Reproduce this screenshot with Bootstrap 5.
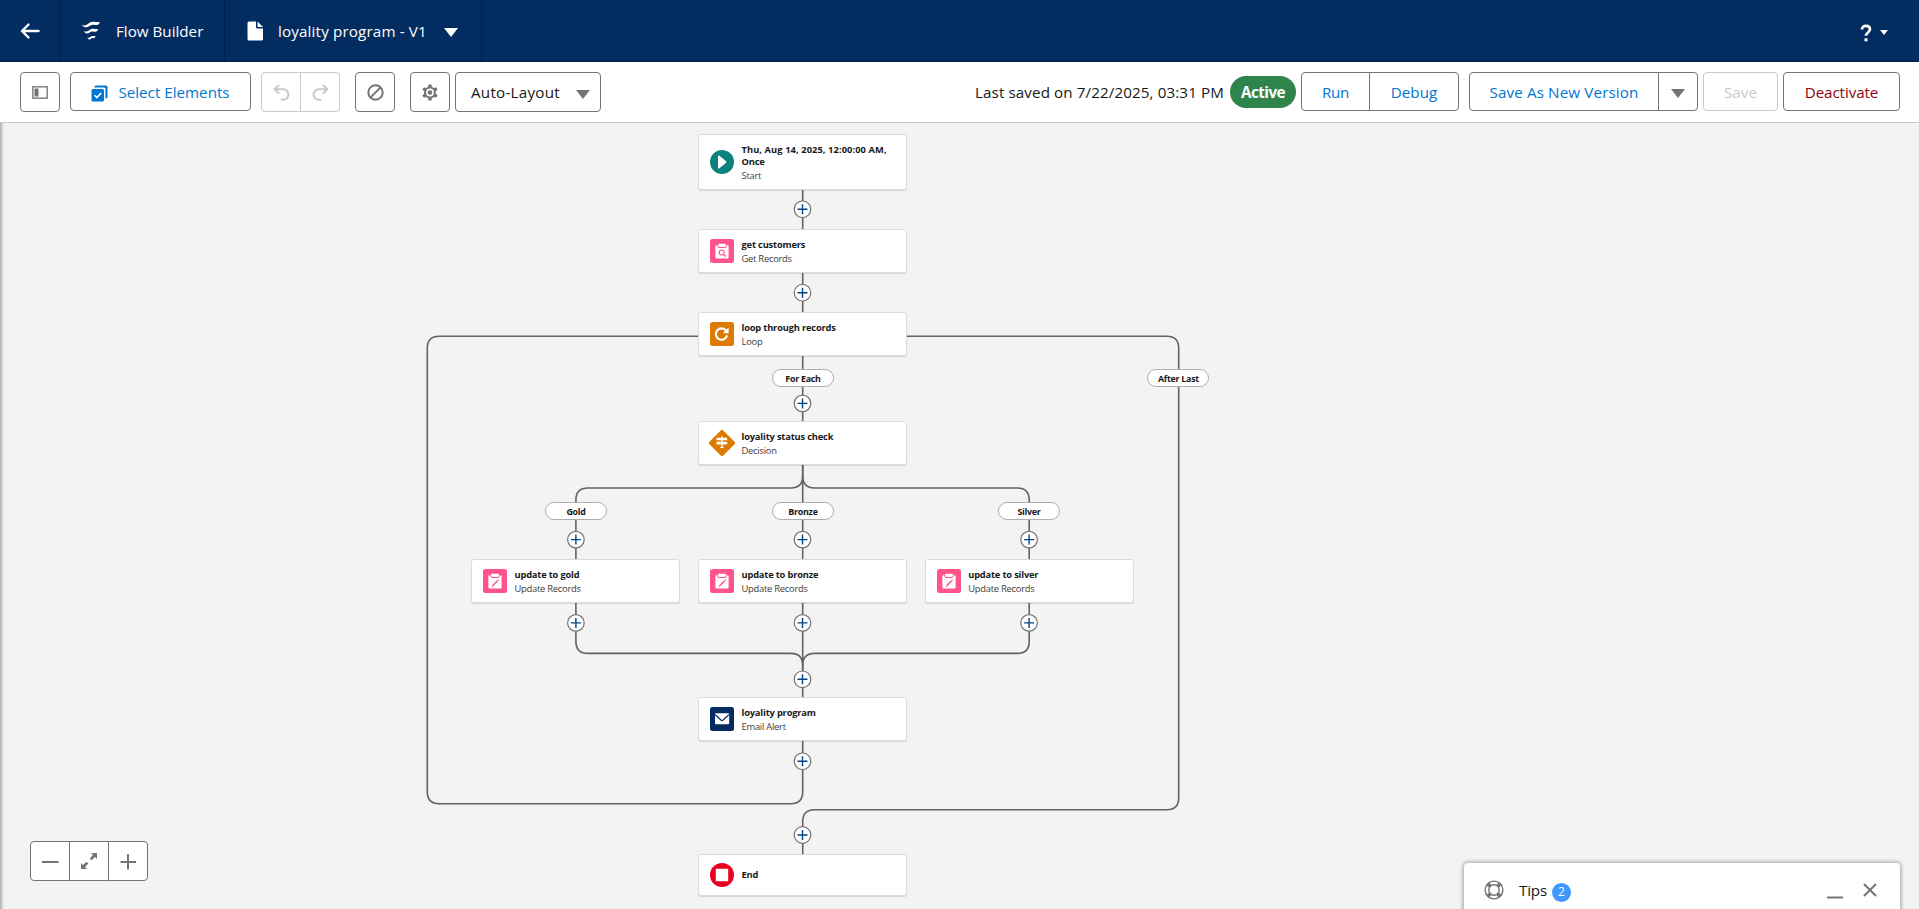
<!DOCTYPE html>
<html lang="en">
<head>
<meta charset="utf-8">
<title>Flow Builder</title>
<link href="https://cdn.jsdelivr.net/npm/bootstrap@5.3.0/dist/css/bootstrap.min.css" rel="stylesheet">
<style>
body{font-family:"Open Sans","Noto Sans",sans-serif;font-size:15.2px;line-height:20px;color:#181818;height:909px;overflow:hidden;background:#f3f3f3}
svg{display:block;flex:none}
.topbar{height:62px;background:#032d60;border-bottom:1px solid #02204a}
.topbar .seg{border-right:1px solid #021f47;height:61px}
.seg-back{width:61px;padding-left:20px}
.seg-app{width:164px;padding-left:20px}
.seg-flow{width:257px;padding-left:22px}
.seg-app span{margin-left:15px}
.seg-flow .flow-name{margin-left:15px;width:149px;letter-spacing:.15px;white-space:nowrap}
.seg-flow .caret-d{margin-left:17px;margin-top:4px}
.help-menu{margin-right:31px;margin-top:4px}
.toolbar{height:61px;background:#fff;border-bottom:1px solid #c9c9c9;padding:10px 19px 0 20px}
.tb{height:39px;border:1px solid #747474;border-radius:4px;background:#fff;color:#0176d3;padding:0;font-size:15.2px;line-height:20px;display:flex;align-items:center;justify-content:center;white-space:nowrap}
.tb-sq{width:40px;height:40px}
.tb-off{border-color:#c9c9c9;color:#c9c9c9}
.join-l{border-radius:4px 0 0 4px}
.join-r{border-radius:0 4px 4px 0;margin-left:-1px}
.gap-a{margin-left:5px}.gap-b{margin-left:10px}.gap-c{margin-left:15px}
.b-select{width:181px}.b-select span{margin-left:10px}
.b-layout{width:146px;height:40px;padding-left:15px;color:#181818}
.b-layout span{width:90px;letter-spacing:.25px;text-align:left;margin-right:15px}
.saved{margin-top:10px;width:255px;letter-spacing:.1px;white-space:nowrap}
.b-run{width:69px}.b-run span{letter-spacing:-.3px}
.b-debug{width:90px}
.b-saveas{width:190px}.b-saveas span{letter-spacing:.13px}
.b-more{width:40px}.b-save{width:75px}
.b-deact{width:117px;color:#8e030f;letter-spacing:-.1px}
.pill{width:66px;height:32px;border-radius:16px;background:#2e844a;color:#fff;font-weight:700;letter-spacing:-.5px}
.stage{height:786px;box-shadow:inset 4px 0 3px -2px rgba(0,0,0,.28)}
.node{width:209px;height:44px;background:#fff;border:1px solid #dddbda;border-radius:3px;box-shadow:0 1px 1px rgba(0,0,0,.12);padding-left:11px;gap:7.5px}
.node .txt{padding-top:3px}
.node b,.node small{display:block;font-size:9.3px;line-height:12px;white-space:nowrap;letter-spacing:-.17px}
.node .wide{letter-spacing:.09px}
.node small{font-size:9.4px;line-height:14px;margin-top:1px;color:#3e3e3c;letter-spacing:-.25px}
.tag{width:62px;height:18px;border:1px solid #aeaeae;border-radius:9px;background:#fff;font-size:8.9px;line-height:17px;font-weight:700;text-align:center;letter-spacing:-.27px}
.c1{left:698px}.c0{left:471px}.c2{left:924.7px}
.t-start{top:11px;height:56px}.t-get{top:106px}.t-loop{top:189px}.t-dec{top:298px}.t-upd{top:436px}.t-mail{top:574px}.t-end{top:730.600px;height:42px}
.t-end .txt{padding-top:0}
.tag-a{top:246px}.tag-b{top:379px}
.g1{left:772px}.g0{left:545px}.g2{left:998px}.g3{left:1147.400px}
.zoombar{left:30px;top:718px}
.zoombar .tb{width:40px;height:40px}
.tips{left:1464px;top:740px;width:436px;height:54px;background:#fff;border-radius:4px 4px 0 0;box-shadow:0 0 4px 1px rgba(0,0,0,.35);padding:0 23px 0 20px}
.tips .ttl{margin-left:15px;width:33px;letter-spacing:-.2px}
.tips .cls{margin-left:20px}
.count{width:19px;height:19px;border-radius:10px;background:#4097ff;color:#fff;font-size:12px;line-height:18px;text-align:center}
</style>
<script src="https://cdn.jsdelivr.net/npm/bootstrap@5.3.0/dist/js/bootstrap.bundle.min.js"></script>
</head>
<body>
<svg width="0" height="0" class="position-absolute">
  <defs>
    <g id="plus"><circle r="8.3" fill="#fff" stroke="#747474" stroke-width="1.2"/><path d="M-5 0H5M0-5V5" stroke="#014486" stroke-width="1.4"/></g>
    <symbol id="update" viewBox="0 0 24 24"><rect width="24" height="24" rx="2.5" fill="#ff538a"/><path fill="#fff" d="M8.6 4.8h6.8c.3 0 .5.2.5.5v1.3c0 .9-.6 1.5-1.5 1.5H9.6c-.9 0-1.5-.6-1.5-1.5V5.3c0-.3.2-.5.5-.5z"/><path fill="#fff" d="M6.7 6.2h.6v.9c0 1 .8 1.900 1.900 1.900h5.600c1.100 0 1.900-.9 1.900-1.900v-.9h.6c.8 0 1.300.5 1.300 1.300v10.800c0 .8-.5 1.300-1.300 1.300H6.700c-.8 0-1.300-.5-1.300-1.300V7.500c0-.8.5-1.300 1.300-1.300z"/><path d="M9.700 16.800l4.900-5.100" stroke="#ff538a" stroke-width="1.500"/><path d="M8.800 17.800l.4-1.500 1.100 1.100zM14.400 10.900l.7-.6 1.100 1.100-.6.700z" fill="#ff538a"/></symbol>
  </defs>
</svg>

<header class="topbar d-flex text-white">
  <div class="seg seg-back d-flex align-items-center"><svg width="20" height="18" viewBox="0 0 20 18" fill="none" stroke="#fff" stroke-width="2.400" stroke-linecap="round" stroke-linejoin="round"><path d="M18.500 9H2.500M8.500 2.500L2 9l6.500 6.500"/></svg></div>
  <div class="seg seg-app d-flex align-items-center"><svg width="20" height="20" viewBox="0 0 20 20" fill="#fff"><path d="M1 3.300C3.500 6 6 3.600 8.500 1.800 11.500-.3 15 1.200 19 1.300c-1 2.900-3.600 3.200-6.200 2.500C9.500 2.900 8 6.500 4.500 6.300 2.600 6.200 1.400 5 1 3.300z"/><path d="M3.200 9.700c2 1.800 3.600.4 5.300-.8 2.700-1.900 5.500-.6 8.800-.7-1 2.600-3.200 2.900-5.400 2.300-2.600-.7-3.400 2.200-6.100 2-1.500-.1-2.400-1.300-2.600-2.800z"/><path d="M6.600 16.200c1.300 1.200 2.300.2 3.400-.6 1.300-.9 2.700-.4 4.600-.4-.7 2-1.900 2.100-3.100 1.900-1.300-.2-1.500 1.600-2.900 1.500-1.100-.1-1.800-1.100-2-2.400z"/></svg><span>Flow Builder</span></div>
  <div class="seg seg-flow d-flex align-items-center"><svg width="16" height="20" viewBox="0 0 16 20"><path fill="#fff" d="M2 .5h7V6c0 .9.6 1.500 1.500 1.500H16V18a1.500 1.500 0 0 1-1.500 1.500H2A1.500 1.500 0 0 1 .5 18V2A1.500 1.500 0 0 1 2 .5zM10.500.5L16 6h-5c-.3 0-.5-.2-.5-.5z"/></svg><span class="flow-name">loyality program - V1</span><svg class="caret-d" width="14" height="9"><path fill="#fff" d="M0 0h14L7 9z"/></svg></div>
  <div class="help-menu ms-auto d-flex align-items-center"><svg width="12" height="18" viewBox="0 0 12 18"><path d="M2 5.600C2 3 3.700 1.800 6 1.800s4 1.300 4 3.400c0 3.300-4 3.200-4 6.600" fill="none" stroke="#fff" stroke-width="2.700"/><rect x="4.500" y="14.300" width="3" height="3" fill="#fff"/></svg><svg class="ms-2" width="8" height="5"><path fill="#fff" d="M0 0h8L4 5z"/></svg></div>
</header>

<div class="toolbar d-flex align-items-start">
  <button class="tb tb-sq"><svg width="16" height="13" viewBox="0 0 16 13"><rect x=".8" y=".8" width="14.400" height="11.400" fill="none" stroke="#8a8a8a" stroke-width="1.600"/><rect x="2.500" y="2.500" width="4" height="8" fill="#747474"/></svg></button>
  <button class="tb b-select gap-b"><svg class="mt-1" width="17" height="17" viewBox="0 0 17 17" fill="#0176d3"><path d="M5 .5h10A1.500 1.500 0 0 1 16.500 2v10a1.500 1.500 0 0 1-1.500 1.500h-.5V4A1.500 1.500 0 0 0 13 2.500H3.500V2A1.500 1.500 0 0 1 5 .5z"/><rect x=".5" y="4" width="12.500" height="12.500" rx="1.500"/><path d="M3.500 10.200l2.400 2.400 4.300-4.600" fill="none" stroke="#fff" stroke-width="1.600"/></svg><span>Select Elements</span></button>
  <button class="tb tb-sq tb-off join-l gap-b"><svg width="17" height="17" viewBox="0 0 17 17" fill="none" stroke="#c9c9c9" stroke-width="2" stroke-linecap="round" stroke-linejoin="round"><path d="M5.500 1.500L1.500 5.300l4 3.700M1.800 5.300h8.400a5.200 5.200 0 0 1 0 10.400H8.500"/></svg></button>
  <button class="tb tb-sq tb-off join-r"><svg width="17" height="17" viewBox="0 0 17 17" fill="none" stroke="#c9c9c9" stroke-width="2" stroke-linecap="round" stroke-linejoin="round"><path d="M11.500 1.500l4 3.800-4 3.700M15.200 5.300H6.800a5.200 5.200 0 0 0 0 10.400h1.700"/></svg></button>
  <button class="tb tb-sq gap-c"><svg width="17" height="17" viewBox="0 0 17 17" fill="none" stroke="#747474" stroke-width="2"><circle cx="8.500" cy="8.500" r="7.200"/><path d="M3.600 13.400l9.800-9.800"/></svg></button>
  <button class="tb tb-sq gap-c"><svg width="16" height="17" viewBox="0 0 16 17"><g fill="#747474"><circle cx="8" cy="8.500" r="6"/><g id="tooth"><rect x="6.300" y=".5" width="3.400" height="16" rx=".8"/></g><use href="#tooth" transform="rotate(60 8 8.500)"/><use href="#tooth" transform="rotate(120 8 8.500)"/></g><circle cx="8" cy="8.500" r="3.900" fill="#fff"/><circle cx="8" cy="8.500" r="2.300" fill="#747474"/></svg></button>
  <button class="tb justify-content-start b-layout gap-a"><span>Auto-Layout</span><svg class="mt-1" width="14" height="9"><path fill="#747474" d="M0 0h14L7 9z"/></svg></button>

  <div class="saved ms-auto">Last saved on 7/22/2025, 03:31 PM</div>
  <div class="pill d-flex align-items-center justify-content-center mt-1">Active</div>
  <button class="tb join-l b-run gap-a"><span>Run</span></button>
  <button class="tb join-r b-debug">Debug</button>
  <button class="tb join-l b-saveas gap-b"><span>Save As New Version</span></button>
  <button class="tb join-r b-more"><svg width="14" height="9" class="mt-1"><path fill="#747474" d="M0 0h14L7 9z"/></svg></button>
  <button class="tb tb-off b-save gap-a">Save</button>
  <button class="tb b-deact gap-a">Deactivate</button>
</div>

<main class="stage position-relative overflow-hidden">
  <svg class="position-absolute top-0 start-0" width="1919" height="786" viewBox="0 123 1919 786">
    <g fill="none" stroke="#636363" stroke-width="1.600">
      <path d="M802.700 189V488M802.700 460V700M802.700 741V791.700Q802.700 803.700 790.700 803.700H439.300Q427.300 803.700 427.300 791.700V348.200Q427.300 336.200 439.300 336.200H1166.700Q1178.700 336.200 1178.700 348.200V797.700Q1178.700 809.700 1166.700 809.700H814.700Q802.700 809.700 802.700 821.700V854"/>
      <path d="M802.700 464V476Q802.700 488 790.700 488H587.900Q575.900 488 575.900 500V641.400Q575.900 653.400 587.900 653.400H790.700Q802.700 653.400 802.700 665.400"/>
      <path d="M802.700 476Q802.700 488 814.700 488H1017.200Q1029.200 488 1029.200 500V641.400Q1029.200 653.400 1017.200 653.400H814.700Q802.700 653.400 802.700 665.400V680"/>
    </g>
    <use href="#plus" x="802.500" y="209.200"/><use href="#plus" x="802.500" y="292.700"/><use href="#plus" x="802.500" y="403.400"/>
    <use href="#plus" x="802.500" y="539.600"/><use href="#plus" x="802.500" y="622.900"/><use href="#plus" x="802.500" y="679.300"/>
    <use href="#plus" x="802.500" y="761.200"/><use href="#plus" x="802.500" y="835"/>
    <use href="#plus" x="575.900" y="539.600"/><use href="#plus" x="575.900" y="622.900"/><use href="#plus" x="1029.100" y="539.600"/><use href="#plus" x="1029.100" y="622.900"/>
  </svg>

  <div class="node position-absolute d-flex align-items-center c1 t-start"><svg width="24" height="24" viewBox="0 0 24 24"><circle cx="12" cy="12" r="12" fill="#0b827c"/><path fill="#fff" d="M8 6.200c0-.7.600-1 1.100-.6l7 5.700c.4.400.4 1 0 1.400l-7 5.700c-.5.400-1.100.1-1.100-.6z"/></svg><div class="txt"><b><span class="wide">Thu, Aug 14, 2025, 12:00:00 AM,</span><br>Once</b><small>Start</small></div></div>
  <div class="node position-absolute d-flex align-items-center c1 t-get"><svg width="24" height="24" viewBox="0 0 24 24"><rect width="24" height="24" rx="2.500" fill="#ff538a"/><path fill="#fff" d="M8.600 4.800h6.800c.3 0 .5.2.5.5v1.300c0 .9-.6 1.500-1.500 1.500H9.600c-.9 0-1.500-.6-1.500-1.500V5.300c0-.3.200-.5.5-.5z"/><path fill="#fff" d="M6.700 6.200h.6v.9c0 1 .8 1.900 1.900 1.900h5.600c1.100 0 1.900-.9 1.900-1.900v-.9h.6c.8 0 1.300.5 1.300 1.300v10.800c0 .8-.5 1.300-1.300 1.300H6.700c-.8 0-1.300-.5-1.300-1.300V7.500c0-.8.5-1.300 1.300-1.300z"/><circle cx="11.700" cy="13.500" r="2.500" fill="none" stroke="#ff538a" stroke-width="1.100"/><path d="M13.600 15.300l2.200 2.200" stroke="#ff538a" stroke-width="1.300"/></svg><div class="txt"><b>get customers</b><small>Get Records</small></div></div>
  <div class="node position-absolute d-flex align-items-center c1 t-loop"><svg width="24" height="24" viewBox="0 0 24 24"><rect width="24" height="24" rx="2.500" fill="#dd7a01"/><path d="M16.800 14.200a5.700 5.700 0 1 1-.7-5.600" fill="none" stroke="#fff" stroke-width="2.200" stroke-linecap="round"/><path d="M18.600 5.500v5.800h-5.800z" fill="#fff"/></svg><div class="txt"><b>loop through records</b><small>Loop</small></div></div>
  <div class="node position-absolute d-flex align-items-center c1 t-dec"><svg width="24" height="24" viewBox="0 0 24 24" overflow="visible"><rect x="2.200" y="2.200" width="19.600" height="19.600" rx="1.800" transform="rotate(45 12 12)" fill="#dd7a01"/><path fill="#fff" d="M7.300 6.700h9.800v2.600H7.300L6 8zM6.500 10.800h9.700l1.700 1.300-1.700 1.300H6.500zM11.300 5.600h1.400v10h-1.400zM10.100 17c.4-1 1-1.400 1.900-1.400s1.500.4 1.900 1.400z"/></svg><div class="txt"><b>loyality status check</b><small>Decision</small></div></div>
  <div class="node position-absolute d-flex align-items-center c0 t-upd"><svg width="24" height="24"><use href="#update"/></svg><div class="txt"><b>update to gold</b><small>Update Records</small></div></div>
  <div class="node position-absolute d-flex align-items-center c1 t-upd"><svg width="24" height="24"><use href="#update"/></svg><div class="txt"><b>update to bronze</b><small>Update Records</small></div></div>
  <div class="node position-absolute d-flex align-items-center c2 t-upd"><svg width="24" height="24"><use href="#update"/></svg><div class="txt"><b>update to silver</b><small>Update Records</small></div></div>
  <div class="node position-absolute d-flex align-items-center c1 t-mail"><svg width="24" height="24" viewBox="0 0 24 24"><rect width="24" height="24" rx="2.500" fill="#032d60"/><rect x="5" y="6.300" width="14.200" height="11" rx="1.200" fill="#fff"/><path d="M5.200 7.700l6 5.500c.5.400 1.100.4 1.600 0l6-5.500" fill="none" stroke="#032d60" stroke-width="1.200"/></svg><div class="txt"><b>loyality program</b><small>Email Alert</small></div></div>
  <div class="node position-absolute d-flex align-items-center c1 t-end"><svg width="24" height="24" viewBox="0 0 24 24"><circle cx="12" cy="12" r="12" fill="#ea001e"/><rect x="5.800" y="5.800" width="12.400" height="12.400" rx=".5" fill="#fff"/></svg><div class="txt"><b>End</b></div></div>

  <div class="tag position-absolute g1 tag-a">For Each</div>
  <div class="tag position-absolute g3 tag-a">After Last</div>
  <div class="tag position-absolute g0 tag-b">Gold</div>
  <div class="tag position-absolute g1 tag-b">Bronze</div>
  <div class="tag position-absolute g2 tag-b">Silver</div>

  <div class="zoombar position-absolute d-flex">
    <button class="tb join-l"><svg width="18" height="18" stroke="#747474" stroke-width="2"><path d="M1 10H17.500"/></svg></button>
    <button class="tb join-r rounded-0"><svg width="18" height="18" viewBox="0 0 18 18"><path fill="#747474" d="M11 1h6v6l-2-2-3.500 3.300-1.800-1.800L13 3zM1 17v-6l2 2 3.500-3.300 1.800 1.800L5 15l2 2z"/></svg></button>
    <button class="tb join-r"><svg width="18" height="18" stroke="#747474" stroke-width="2"><path d="M1.500 10H17M9 2V17.500"/></svg></button>
  </div>

  <aside class="tips position-absolute d-flex align-items-center">
    <svg width="20" height="20" viewBox="0 0 20 20" fill="none" stroke="#747474"><circle cx="10" cy="10" r="8.900" stroke-width="1.400"/><circle cx="10" cy="10" r="5.200" stroke-width="1.400"/><g stroke-width="3.600"><path d="M3.500 3.500l2.800 2.800M16.500 3.500l-2.800 2.800M3.500 16.500l2.800-2.800M16.500 16.500l-2.800-2.800"/></g></svg>
    <span class="ttl">Tips</span><span class="count mt-1">2</span>
    <svg class="ms-auto" width="16" height="20"><path d="M0 17.500h16" stroke="#747474" stroke-width="2"/></svg>
    <svg class="cls" width="14" height="14" stroke="#747474" stroke-width="2"><path d="M1 1l12 12M13 1L1 13"/></svg>
  </aside>
</main>
</body>
</html>
